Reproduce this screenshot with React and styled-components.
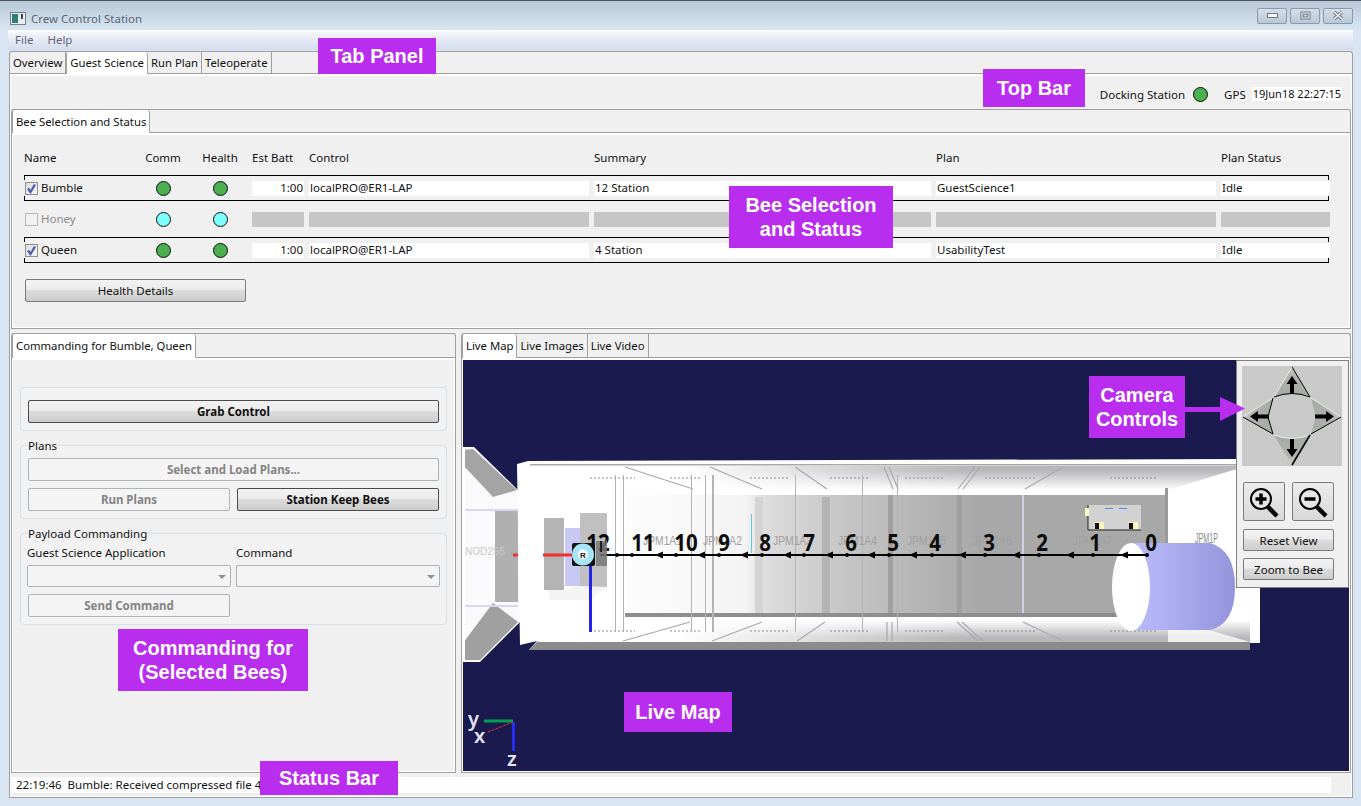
// App.jsx
import React from 'react';
import styled, { createGlobalStyle } from 'styled-components';

const GlobalStyle = createGlobalStyle`
  html, body {
    margin: 0;
    padding: 0;
    overflow: hidden;
    background: #d9e5f2;
  }
  * { box-sizing: border-box; }
`;

const Window = styled.div`
  width: 1361px;
  height: 806px;
  display: flex;
  flex-direction: column;
  position: relative;
  overflow: hidden;
  background: #d9e5f2;
  border-top: 1px solid #4a5058;
  font-family: "Noto Sans", "Open Sans", sans-serif;
  font-size: 11.5px;
  color: #111;
`;

const TitleBar = styled.div`
  height: 29px;
  flex: none;
  display: flex;
  align-items: center;
  padding: 6px 10px 0 10px;
  gap: 5px;
  background: linear-gradient(#b8c8d8, #d8e6f3);
  color: #59646f;
`;

const TitleText = styled.span`
  flex: 1;
`;

const WinButtons = styled.div`
  display: flex;
  gap: 3px;
  margin: -6px -2px 0 0;
`;

const WinButton = styled.div`
  width: 30px;
  height: 16px;
  display: flex;
  align-items: center;
  justify-content: center;
  border: 1px solid #8a9aa9;
  border-radius: 2px;
  background: linear-gradient(#d3dee8, #b9c8d6);
`;

const Client = styled.div`
  flex: 1;
  min-height: 0;
  margin: 0 8px 8px 8px;
  display: flex;
  flex-direction: column;
`;

const MenuBar = styled.div`
  height: 20px;
  flex: none;
  display: flex;
  gap: 14px;
  align-items: center;
  padding: 0 7px 1px;
  background: linear-gradient(#ffffff, #eef1f8 25%, #d4dbee);
  color: #66667a;
`;

const TabSection = styled.div`
  display: flex;
  flex-direction: column;
  flex: ${p => (p.$grow ? '1' : 'none')};
  min-height: 0;
  min-width: 0;
  margin: ${p => p.$m || '0'};
`;

const TabBar = styled.div`
  display: flex;
  flex: none;
  height: ${p => p.$h || 24}px;
  align-items: flex-end;
  background: #f0f0f0;
  border: 1px solid #a0a0a0;
  border-bottom: none;
  border-radius: 3px 3px 0 0;
`;

const Tab = styled.div`
  height: ${p => (p.$active ? 'calc(100% + 1px)' : '100%')};
  margin-bottom: ${p => (p.$active ? '-1px' : '0')};
  display: flex;
  align-items: center;
  padding: 0 3px 1px;
  font-size: 11.3px;
  white-space: nowrap;
  border-right: 1px solid #a0a0a0;
  border-left: ${p => (p.$active ? '1px solid #a0a0a0' : 'none')};
  border-radius: ${p => (p.$active ? '3px 3px 0 0' : '0')};
  background: ${p => (p.$active ? '#ffffff' : 'transparent')};
  position: relative;
  z-index: ${p => (p.$active ? 1 : 0)};
`;

const Pane = styled.div`
  flex: ${p => (p.$grow ? '1' : 'none')};
  min-height: 0;
  height: ${p => (p.$h ? `${p.$h}px` : 'auto')};
  display: flex;
  flex-direction: column;
  background: #f0f0f0;
  border: 1px solid #a0a0a0;
  box-shadow: inset 0 0 0 1px #ffffff, inset 0 2px 0 #ffffff;
  padding: ${p => p.$pad || '0'};
`;

const TopBar = styled.div`
  height: 33px;
  flex: none;
  display: flex;
  align-items: center;
  justify-content: flex-end;
  padding: 3px 9px 0 0;
`;

const Led = styled.span`
  display: inline-block;
  width: 15px;
  height: 15px;
  border-radius: 50%;
  border: 1px solid #101010;
  background: ${p => (p.$off ? '#80ffff' : '#4caf50')};
  margin: ${p => p.$m || '0'};
`;

const Clock = styled.span`
  background: #fff;
  height: 14px;
  line-height: 14px;
  padding: 0 1px;
  margin-left: 6px;
  font-size: 11px;
`;

const BeeGrid = styled.div`
  display: grid;
  grid-template-columns: 109px 50px 54px 52px 280px 337px 280px 109px;
  column-gap: 5px;
  align-items: center;
  height: ${p => p.$h || 26}px;
  margin: ${p => p.$m || '0 0 5px 0'};
  position: relative;
  border-top: 1px solid ${p => (p.$selected ? '#000' : 'transparent')};
  border-bottom: 1px solid ${p => (p.$selected ? '#000' : 'transparent')};

  ${p => p.$selected && `
    &::before, &::after {
      content: "";
      position: absolute;
      top: 0;
      bottom: 0;
      width: 1px;
      background: linear-gradient(#000 4px, transparent 4px, transparent calc(100% - 4px), #000 calc(100% - 4px));
    }
    &::before { left: 0; }
    &::after { right: 0; }
  `}
`;

const HeadCell = styled.div`
  margin-top: -2px;
  text-align: ${p => (p.$center ? 'center' : 'left')};
  white-space: nowrap;
`;

const NameCell = styled.label`
  display: flex;
  align-items: center;
  gap: 3px;
  padding-left: 1px;
  color: ${p => (p.$off ? '#8b8b8b' : '#111')};
`;

const NameText = styled.span`
  margin-top: -2px;
`;

const CheckBox = styled.span`
  width: 13px;
  height: 13px;
  flex: none;
  border: 1px solid ${p => (p.$off ? '#b9b9b9' : '#8e8f8f')};
  background: ${p => (p.$off ? '#f2f2f2' : 'linear-gradient(135deg, #dcdcdc, #f8f8f8)')};
  display: flex;
  align-items: center;
  justify-content: center;
`;

const LedCell = styled.div`
  display: flex;
  justify-content: center;
`;

const Field = styled.div`
  height: 15px;
  line-height: 13px;
  padding: 0 1px;
  white-space: nowrap;
  overflow: hidden;
  text-align: ${p => (p.$right ? 'right' : 'left')};
  background: ${p => (p.$off ? '#c6c6c6' : '#ffffff')};
`;

const PushButton = styled.div`
  height: 23px;
  width: ${p => (p.$w ? `${p.$w}px` : 'auto')};
  margin: ${p => p.$m || '0'};
  display: flex;
  align-items: center;
  justify-content: center;
  white-space: nowrap;
  border-radius: 2px;
  font-weight: ${p => (p.$bold ? 700 : 400)};
  color: ${p => (p.$disabled ? '#848484' : '#111')};
  border: 1px solid ${p => (p.$disabled ? '#adb2b5' : p.$bold ? '#4a4a4a' : '#7c7c7c')};
  background: ${p => (p.$disabled
    ? '#f4f4f4'
    : 'linear-gradient(#f3f3f3, #ebebeb 45%, #dcdcdc 50%, #cdcdcd)')};
`;

const Lower = styled.div`
  flex: 1;
  min-height: 0;
  margin-top: 4px;
  display: flex;
  gap: 5px;
`;

const CommandColumn = styled(TabSection)`
  width: 445px;
  flex: none;
`;

const Group = styled.div`
  position: relative;
  margin: ${p => p.$m || '0 0 14px 0'};
  padding: 12px 7px 7px;
  background: #f2f2f2;
  border: 1px solid #d6e0e8;
  border-radius: 4px;
  display: flex;
  flex-direction: column;
  gap: 7px;
`;

const GroupTitle = styled.span`
  position: absolute;
  top: -8px;
  left: 6px;
  padding: 0 1px;
  line-height: 16px;
  background: #f0f0f0;
`;

const TwoCols = styled.div`
  display: grid;
  grid-template-columns: 1fr 1fr;
  column-gap: 7px;
`;

const FieldLabel = styled.div`
  margin: -1px 0 4px -1px;
  line-height: 16px;
`;

const Combo = styled.div`
  height: 22px;
  margin: 0 -1px;
  position: relative;
  background: #f4f4f4;
  border: 1px solid #adb2b5;
  border-radius: 2px;

  &::after {
    content: "";
    position: absolute;
    right: 4px;
    top: 9px;
    border: 4px solid transparent;
    border-top: 4px solid #8f8f8f;
  }
`;

const MapColumn = styled(TabSection)`
  flex: 1;
`;

const MapView = styled.div`
  flex: 1;
  min-height: 0;
  margin: 2px 1px 1px;
  position: relative;
  background: #1a1a4e;
  overflow: hidden;

  svg { display: block; }
`;

const CameraPanel = styled.div`
  position: absolute;
  top: 0;
  right: 0;
  width: 113px;
  height: 228px;
  background: #f0f0f0;
  border: 1px solid #808080;
  padding: 5px 6px 0 5px;
  display: flex;
  flex-direction: column;
`;

const Pad = styled.div`
  width: 100px;
  height: 100px;
  background: #c9c9c9;
  margin-bottom: 16px;
`;

const ZoomRow = styled.div`
  display: flex;
  gap: 7px;
  margin: 0 0 8px 1px;
`;

const ZoomButton = styled.div`
  width: 42px;
  height: 39px;
  border: 1px solid #7c7c7c;
  border-radius: 2px;
  background: linear-gradient(#ececec, #d8d8d8);
  display: flex;
  align-items: center;
  justify-content: center;
`;

const SideButton = styled(PushButton)`
  width: 91px;
  margin: 0 0 7px 1px;
`;

const StatusBar = styled.div`
  flex: none;
  height: 24px;
  padding: 4px 20px 4px 1px;
`;

const StatusField = styled.div`
  height: 16px;
  line-height: 16px;
  background: #fff;
  padding-left: 4px;
  white-space: nowrap;
`;

// purple annotations pasted over the screenshot
const Callout = styled.div`
  position: absolute;
  left: ${p => p.$x}px;
  top: ${p => p.$y}px;
  width: ${p => p.$w}px;
  height: ${p => p.$h}px;
  display: flex;
  align-items: center;
  justify-content: center;
  text-align: center;
  background: #b92eee;
  color: #fff;
  font-family: "Liberation Sans", Arial, sans-serif;
  font-weight: 700;
  font-size: 20px;
  line-height: 24px;
  z-index: 5;
`;

const CalloutArrow = styled.svg`
  position: absolute;
  left: 1185px;
  top: 395px;
  z-index: 5;
`;

const Check = () => (
  <svg width="11" height="11" viewBox="0 0 11 11">
    <path d="M2 5.5 L4.5 9 L9 1.5" fill="none" stroke="#4a5bb0" strokeWidth="2.2" />
  </svg>
);

const AppIcon = () => (
  <svg width="16" height="13" viewBox="0 0 16 13">
    <rect x="0.5" y="0.5" width="15" height="12" fill="#e8ecec" stroke="#77808a" />
    <rect x="2" y="2" width="6" height="9" fill="#2f7f78" />
    <rect x="11" y="2" width="2" height="5" fill="#3a4a58" />
  </svg>
);

const ZoomIcon = ({ plus }) => (
  <svg width="30" height="32" viewBox="0 0 30 32">
    <circle cx="12" cy="13" r="10" fill="#e6e6e6" stroke="#000" strokeWidth="2" />
    <path d="M19 21 L28 30" stroke="#000" strokeWidth="4.5" />
    <path d="M6.5 13 H17.5" stroke="#000" strokeWidth="3.5" />
    {plus && <path d="M12 7.5 V18.5" stroke="#000" strokeWidth="3.5" />}
  </svg>
);

const CameraPad = () => (
  <svg width="100" height="100" viewBox="0 0 100 100">
    <defs>
      <radialGradient id="petal" gradientUnits="userSpaceOnUse" cx="50" cy="50" r="50">
        <stop offset="0.45" stopColor="#a6aaa4" />
        <stop offset="0.8" stopColor="#b0b3ae" />
        <stop offset="1" stopColor="#d0d0d0" />
      </radialGradient>
    </defs>
    <g fill="url(#petal)">
      <path d="M50 1 L68 31 Q50 24 32 31 Z" />
      <path d="M1 51 L31 32 L26 51 L31 68 Z" />
      <path d="M99 51 L69 32 L74 51 L69 68 Z" />
      <path d="M50 99 L32 69 Q50 76 68 69 Z" />
    </g>
    <g fill="none" stroke="#f4f4f4" strokeWidth="0.8">
      <path d="M50 1 L32 31" />
      <path d="M1 51 L31 32" />
      <path d="M99 51 L69 32" />
      <path d="M32 69 Q50 76 68 69" />
    </g>
    <g fill="none" stroke="#000" strokeWidth="1">
      <path d="M50 1 L68 31" />
      <path d="M32 31 Q50 24 68 31" />
      <path d="M31 32 L26 51 L31 68 L1 51" />
      <path d="M99 51 L69 68" />
      <path d="M50 99 L68 69" strokeWidth="1.6" />
    </g>
    <g fill="#000">
      <path d="M50 10 L55.5 18 H52 V27 H48 V18 H44.5 Z" />
      <path d="M50 91 L55.5 83 H52 V73 H48 V83 H44.5 Z" />
      <path d="M8 50.5 L16 45 V48.5 H27 V52.5 H16 V56 Z" />
      <path d="M92 50.5 L84 45 V48.5 H73 V52.5 H84 V56 Z" />
    </g>
  </svg>
);

const waypoints = [617, 632, 676, 719, 762, 804, 847, 889, 932, 985, 1039, 1093, 1147];
const arrowheads = [660, 702, 745, 788, 830, 872, 914, 963, 1017, 1071, 1125];
const stations = [
  [598, '12'], [643, '11'], [686, '10'], [724, '9'], [765, '8'], [809, '7'], [851, '6'],
  [893, '5'], [935, '4'], [989, '3'], [1042, '2'], [1095, '1'], [1151, '0'],
];
const modules = [
  [643, 'JPM1A1'], [703, 'JPM1A2'], [773, 'JPM1A3'], [838, 'JPM1A4'],
  [907, 'JPM1A5'], [973, 'JPM1A6'], [1073, 'JPM1A7'],
];
const wallLines = [615, 623, 691, 705, 712, 713, 795, 862, 897];
// diagonal seams between ceiling panels: [x at top edge, x at wall edge]
const topSeams = [[625, 693], [710, 762], [795, 827], [884, 893], [889, 898], [975, 958], [980, 963], [1063, 1025]];
const bottomSeams = [[690, 623], [762, 712], [825, 797], [887, 887], [892, 892], [957, 978], [962, 983], [1023, 1063]];
const stencilMarks = [[590, 635], [670, 700], [750, 790], [830, 870], [905, 945], [985, 1035], [1110, 1158]];

const LiveMapScene = () => (
  <svg width="886" height="411" viewBox="463 360 886 411">
    <defs>
      <linearGradient id="wall" gradientUnits="userSpaceOnUse" x1="625" y1="0" x2="1000" y2="0">
        <stop offset="0" stopColor="#fdfdfd" />
        <stop offset="0.32" stopColor="#f4f4f4" />
        <stop offset="0.38" stopColor="#dcdcdc" />
        <stop offset="0.6" stopColor="#c4c4c4" />
        <stop offset="0.95" stopColor="#a8a8a8" />
      </linearGradient>
      <linearGradient id="bandTone" gradientUnits="userSpaceOnUse" x1="680" y1="0" x2="960" y2="0">
        <stop offset="0" stopColor="#ffffff" />
        <stop offset="1" stopColor="#b8b8bc" />
      </linearGradient>
      <linearGradient id="fadeDown" x1="0" y1="0" x2="0" y2="1">
        <stop offset="0.2" stopColor="#ffffff" stopOpacity="0" />
        <stop offset="1" stopColor="#ffffff" />
      </linearGradient>
      <linearGradient id="fadeUp" x1="0" y1="1" x2="0" y2="0">
        <stop offset="0.2" stopColor="#ffffff" stopOpacity="0" />
        <stop offset="1" stopColor="#ffffff" />
      </linearGradient>
      <linearGradient id="pod" x1="0" y1="0" x2="1" y2="0">
        <stop offset="0" stopColor="#bcbcfc" />
        <stop offset="1" stopColor="#9494dc" />
      </linearGradient>
    </defs>

    {/* neighbouring node on the left */}
    <polygon points="463,447 474,447 520,492 520,622 480,662 463,662" fill="#fafafc" />
    <polygon points="463,450 473,449 517,490 493,497 463,465" fill="#a4a4a4" />
    <polygon points="463,643 493,603 518,622 480,660 463,660" fill="#a0a0a0" />
    <rect x="495" y="510" width="23" height="92" fill="#b0b0b0" />
    <path d="M463 510 H518 M463 606 H518" stroke="#d8d8f0" strokeWidth="2" />
    <rect x="463" y="447" width="2" height="215" fill="#ffffff" />
    <text x="465" y="555" fontFamily="Liberation Sans" fontSize="10" fill="#c8c8c8">NOD2S5</text>

    {/* main module shell */}
    <polygon points="528,461 1240,459 1260,470 1260,643 1250,643 1250,650 529,650 537,641 520,645 517,464" fill="#ffffff" />
    <rect x="628" y="466" width="610" height="24" fill="url(#bandTone)" />
    <rect x="628" y="466" width="610" height="24" fill="url(#fadeDown)" />
    <rect x="628" y="620" width="622" height="22" fill="url(#bandTone)" />
    <rect x="628" y="620" width="622" height="22" fill="url(#fadeUp)" />
    <polygon points="1168,490 1240,468 1240,490" fill="#ffffff" />
    <polygon points="1168,618 1250,642 1168,642" fill="#ffffff" fillOpacity="0.75" />
    {topSeams.map(([a, b]) => (
      <path key={a} d={`M${a} 467 L${b} 489`} stroke="#a8a8b0" strokeWidth="1.2" />
    ))}
    {bottomSeams.map(([a, b]) => (
      <path key={a} d={`M${a} 622 L${b} 641`} stroke="#a8a8b0" strokeWidth="1.2" />
    ))}
    {stencilMarks.map(([a, b]) => (
      <g key={a} stroke="#8c8c8c" strokeDasharray="2 2">
        <path d={`M${a} 478 H${b}`} />
        <path d={`M${a} 631 H${b}`} />
      </g>
    ))}
    <rect x="530" y="464" width="706" height="1.5" fill="#a8a8a8" />
    <polygon points="537,642 1250,642 1250,650 529,650" fill="#8c8c8c" />

    {/* inside wall */}
    <rect x="625" y="495" width="542" height="119" fill="url(#wall)" />
    <rect x="625" y="613" width="542" height="4" fill="#8e8e8e" />
    <rect x="755" y="497" width="8" height="116" fill="#d4d4d4" />
    <rect x="822" y="497" width="8" height="116" fill="#b4b4b4" />
    <rect x="888" y="495" width="5" height="118" fill="#a0a0a0" />
    <rect x="957" y="495" width="5" height="118" fill="#a0a0a0" />
    <rect x="1022" y="495" width="2" height="118" fill="#d0d0e8" />
    <rect x="1165" y="488" width="3" height="125" fill="#9a9a9a" />
    {wallLines.map(x => (
      <rect key={x} x={x} y="475" width="1" height="157" fill="#b4b4b4" />
    ))}
    <rect x="751" y="514" width="1" height="39" fill="#60c8f0" />

    {/* hatch */}
    <polygon points="544,507 607,512 607,590 544,600" fill="#ffffff" />
    <rect x="544" y="518" width="20" height="72" fill="#b4b4b4" />
    <rect x="565" y="528" width="15" height="58" fill="#c8c8f4" />
    <rect x="580" y="513" width="27" height="74" fill="#c0c0c0" />
    <polygon points="548,590 564,590 580,586 607,587 590,600 550,600" fill="#f4f4f4" />

    {/* docking pod and stowed payload */}
    <rect x="1088" y="505" width="53" height="25" fill="#d2d2d2" />
    <path d="M1088 505 V530 H1141" fill="none" stroke="#222" />
    <rect x="1085" y="508" width="4" height="8" fill="#fff8c0" />
    <rect x="1095" y="522" width="9" height="7" fill="#fff8c0" />
    <rect x="1095" y="523" width="4" height="6" fill="#111" />
    <rect x="1129" y="522" width="9" height="7" fill="#fff8c0" />
    <rect x="1129" y="523" width="4" height="6" fill="#111" />
    <rect x="1105" y="508" width="8" height="1" fill="#4a90f0" />
    <rect x="1119" y="508" width="8" height="1" fill="#4a90f0" />
    {modules.map(([x, label]) => (
      <text key={label} x={x} y="545" textLength="39" lengthAdjust="spacingAndGlyphs" fontFamily="Liberation Sans" fontSize="13" fill="#a0a0a0">{label}</text>
    ))}
    <text x="1195" y="543" textLength="23" lengthAdjust="spacingAndGlyphs" fontFamily="Liberation Sans" fontSize="15" fill="#8c8c8c">JPM1P</text>

    <path d="M1131 543 H1210 Q1235 550 1235 587 Q1235 624 1210 630 H1131 Z" fill="url(#pod)" />
    <ellipse cx="1131" cy="587" rx="19" ry="44" fill="#ffffff" />

    {/* body axes */}
    <rect x="513" y="553.5" width="5" height="3" fill="#f03030" />
    <rect x="543" y="553.5" width="29" height="3" fill="#f03030" />
    <rect x="589" y="565" width="3" height="67" fill="#2424e8" />

    {stations.map(([x, label]) => (
      <text key={label} transform={`translate(${x} 551) scale(1 1.15)`} textAnchor="middle" fontFamily="Noto Sans" fontWeight="700" fontSize="20.5" fill="#0c0c0c">{label}</text>
    ))}

    {/* trajectory */}
    <path d="M600 555 H1147" stroke="#000" strokeWidth="2" />
    {waypoints.map(x => <circle key={x} cx={x} cy="555" r="2" fill="#000" />)}
    {arrowheads.map(x => <polygon key={x} points={`${x - 5},555 ${x + 3},551.5 ${x + 3},558.5`} fill="#000" />)}

    {/* the bee */}
    <rect x="596" y="541" width="11" height="25" fill="#787878" fillOpacity="0.85" />
    <path d="M601 541 V552" stroke="#222" strokeWidth="2" />
    <rect x="572" y="543" width="23" height="23" rx="2" fill="#111" />
    <circle cx="583" cy="554.5" r="11" fill="#a8e4f8" />
    <circle cx="583" cy="554.5" r="5" fill="#fff" />
    <text x="583" y="558" textAnchor="middle" fontFamily="Liberation Sans" fontWeight="700" fontSize="8" fill="#111">R</text>

    {/* world axes */}
    <rect x="484" y="719.5" width="29" height="3" fill="#00a050" />
    <rect x="512" y="722" width="3" height="29" fill="#2a2af0" />
    <path d="M488 732 L513 722" stroke="#f03030" strokeDasharray="3 1" />
    <g fontFamily="Noto Sans" fontWeight="600" fontSize="20" fill="#e4e4f4">
      <text x="468" y="726">y</text>
      <text x="474" y="743">x</text>
      <text x="507" y="766">z</text>
    </g>
  </svg>
);

const bees = [
  { name: 'Bumble', summary: '12 Station', plan: 'GuestScience1', status: 'Idle' },
  { name: 'Honey', off: true },
  { name: 'Queen', summary: '4 Station', plan: 'UsabilityTest', status: 'Idle' },
];

const BeeRow = ({ bee }) => (
  <BeeGrid $selected={!bee.off}>
    <NameCell $off={bee.off}>
      <CheckBox $off={bee.off}>{!bee.off && <Check />}</CheckBox>
      <NameText>{bee.name}</NameText>
    </NameCell>
    <LedCell><Led $off={bee.off} /></LedCell>
    <LedCell><Led $off={bee.off} /></LedCell>
    <Field $off={bee.off} $right>{!bee.off && '1:00'}</Field>
    <Field $off={bee.off}>{!bee.off && 'localPRO@ER1-LAP'}</Field>
    <Field $off={bee.off}>{bee.summary}</Field>
    <Field $off={bee.off}>{bee.plan}</Field>
    <Field $off={bee.off}>{bee.status}</Field>
  </BeeGrid>
);

const App = () => (
  <Window>
    <GlobalStyle />
    <TitleBar>
      <AppIcon />
      <TitleText>Crew Control Station</TitleText>
      <WinButtons>
        <WinButton>
          <svg width="11" height="5" viewBox="0 0 11 5"><rect x="0.5" y="0.5" width="10" height="4" fill="#f4f6f8" stroke="#6b7784" /></svg>
        </WinButton>
        <WinButton>
          <svg width="11" height="9" viewBox="0 0 11 9"><rect x="1" y="1" width="9" height="7" fill="#f4f6f8" stroke="#6b7784" /><rect x="3" y="3" width="5" height="3" fill="#c3d0dc" stroke="#6b7784" /></svg>
        </WinButton>
        <WinButton>
          <svg width="12" height="9" viewBox="0 0 12 9"><path d="M2 1 L10 8 M10 1 L2 8" stroke="#6b7784" strokeWidth="3.4" /><path d="M2 1 L10 8 M10 1 L2 8" stroke="#f4f6f8" strokeWidth="1.6" /></svg>
        </WinButton>
      </WinButtons>
    </TitleBar>
    <Client>
      <MenuBar>
        <span>File</span>
        <span>Help</span>
      </MenuBar>
      <TabSection $grow $m="1px 0 0 1px">
        <TabBar $h={22}>
          <Tab>Overview</Tab>
          <Tab $active>Guest Science</Tab>
          <Tab>Run Plan</Tab>
          <Tab>Teleoperate</Tab>
        </TabBar>
        <Pane $grow $pad="2px 1px 0 1px">
          <TopBar>
            Docking Station
            <Led $m="0 16px 0 8px" />
            GPS
            <Clock>19Jun18 22:27:15</Clock>
          </TopBar>
          <TabSection>
            <TabBar $h={23}>
              <Tab $active>Bee Selection and Status</Tab>
            </TabBar>
            <Pane $h={197} $pad="15px 21px 0 12px">
              <BeeGrid $h={20} $m="0 0 7px 0">
                <HeadCell>Name</HeadCell>
                <HeadCell $center>Comm</HeadCell>
                <HeadCell $center>Health</HeadCell>
                <HeadCell>Est Batt</HeadCell>
                <HeadCell>Control</HeadCell>
                <HeadCell>Summary</HeadCell>
                <HeadCell>Plan</HeadCell>
                <HeadCell>Plan Status</HeadCell>
              </BeeGrid>
              {bees.map(bee => <BeeRow key={bee.name} bee={bee} />)}
              <PushButton $w={221} $m="11px 0 0 1px">Health Details</PushButton>
            </Pane>
          </TabSection>
          <Lower>
            <CommandColumn>
              <TabBar $h={24}>
                <Tab $active>Commanding for Bumble, Queen</Tab>
              </TabBar>
              <Pane $grow $pad="29px 8px 0 8px">
                <Group>
                  <PushButton $bold>Grab Control</PushButton>
                </Group>
                <Group>
                  <GroupTitle>Plans</GroupTitle>
                  <PushButton $bold $disabled>Select and Load Plans...</PushButton>
                  <TwoCols>
                    <PushButton $bold $disabled>Run Plans</PushButton>
                    <PushButton $bold>Station Keep Bees</PushButton>
                  </TwoCols>
                </Group>
                <Group $m="0">
                  <GroupTitle>Payload Commanding</GroupTitle>
                  <TwoCols>
                    <div>
                      <FieldLabel>Guest Science Application</FieldLabel>
                      <Combo />
                    </div>
                    <div>
                      <FieldLabel>Command</FieldLabel>
                      <Combo />
                    </div>
                  </TwoCols>
                  <TwoCols>
                    <PushButton $bold $disabled>Send Command</PushButton>
                  </TwoCols>
                </Group>
              </Pane>
            </CommandColumn>
            <MapColumn>
              <TabBar $h={24}>
                <Tab $active>Live Map</Tab>
                <Tab>Live Images</Tab>
                <Tab>Live Video</Tab>
              </TabBar>
              <Pane $grow>
                <MapView>
                  <LiveMapScene />
                  <CameraPanel>
                    <Pad><CameraPad /></Pad>
                    <ZoomRow>
                      <ZoomButton><ZoomIcon plus /></ZoomButton>
                      <ZoomButton><ZoomIcon /></ZoomButton>
                    </ZoomRow>
                    <SideButton>Reset View</SideButton>
                    <SideButton>Zoom to Bee</SideButton>
                  </CameraPanel>
                </MapView>
              </Pane>
            </MapColumn>
          </Lower>
          <StatusBar>
            <StatusField>22:19:46&nbsp; Bumble: Received compressed file 45...</StatusField>
          </StatusBar>
        </Pane>
      </TabSection>
    </Client>

    <Callout $x={318} $y={37} $w={118} $h={36}>Tab Panel</Callout>
    <Callout $x={983} $y={68} $w={102} $h={38}>Top Bar</Callout>
    <Callout $x={729} $y={185} $w={164} $h={62}>Bee Selection<br />and Status</Callout>
    <Callout $x={118} $y={628} $w={190} $h={62}>Commanding for<br />(Selected Bees)</Callout>
    <Callout $x={624} $y={691} $w={108} $h={40}>Live Map</Callout>
    <Callout $x={1089} $y={375} $w={96} $h={62}>Camera<br />Controls</Callout>
    <Callout $x={260} $y={760} $w={138} $h={34}>Status Bar</Callout>
    <CalloutArrow width="62" height="28" viewBox="0 0 62 28">
      <path d="M0 11 H35 V1 L60 12.5 L35 25 V16 H0 Z" fill="#b92eee" />
    </CalloutArrow>
  </Window>
);

export default App;
